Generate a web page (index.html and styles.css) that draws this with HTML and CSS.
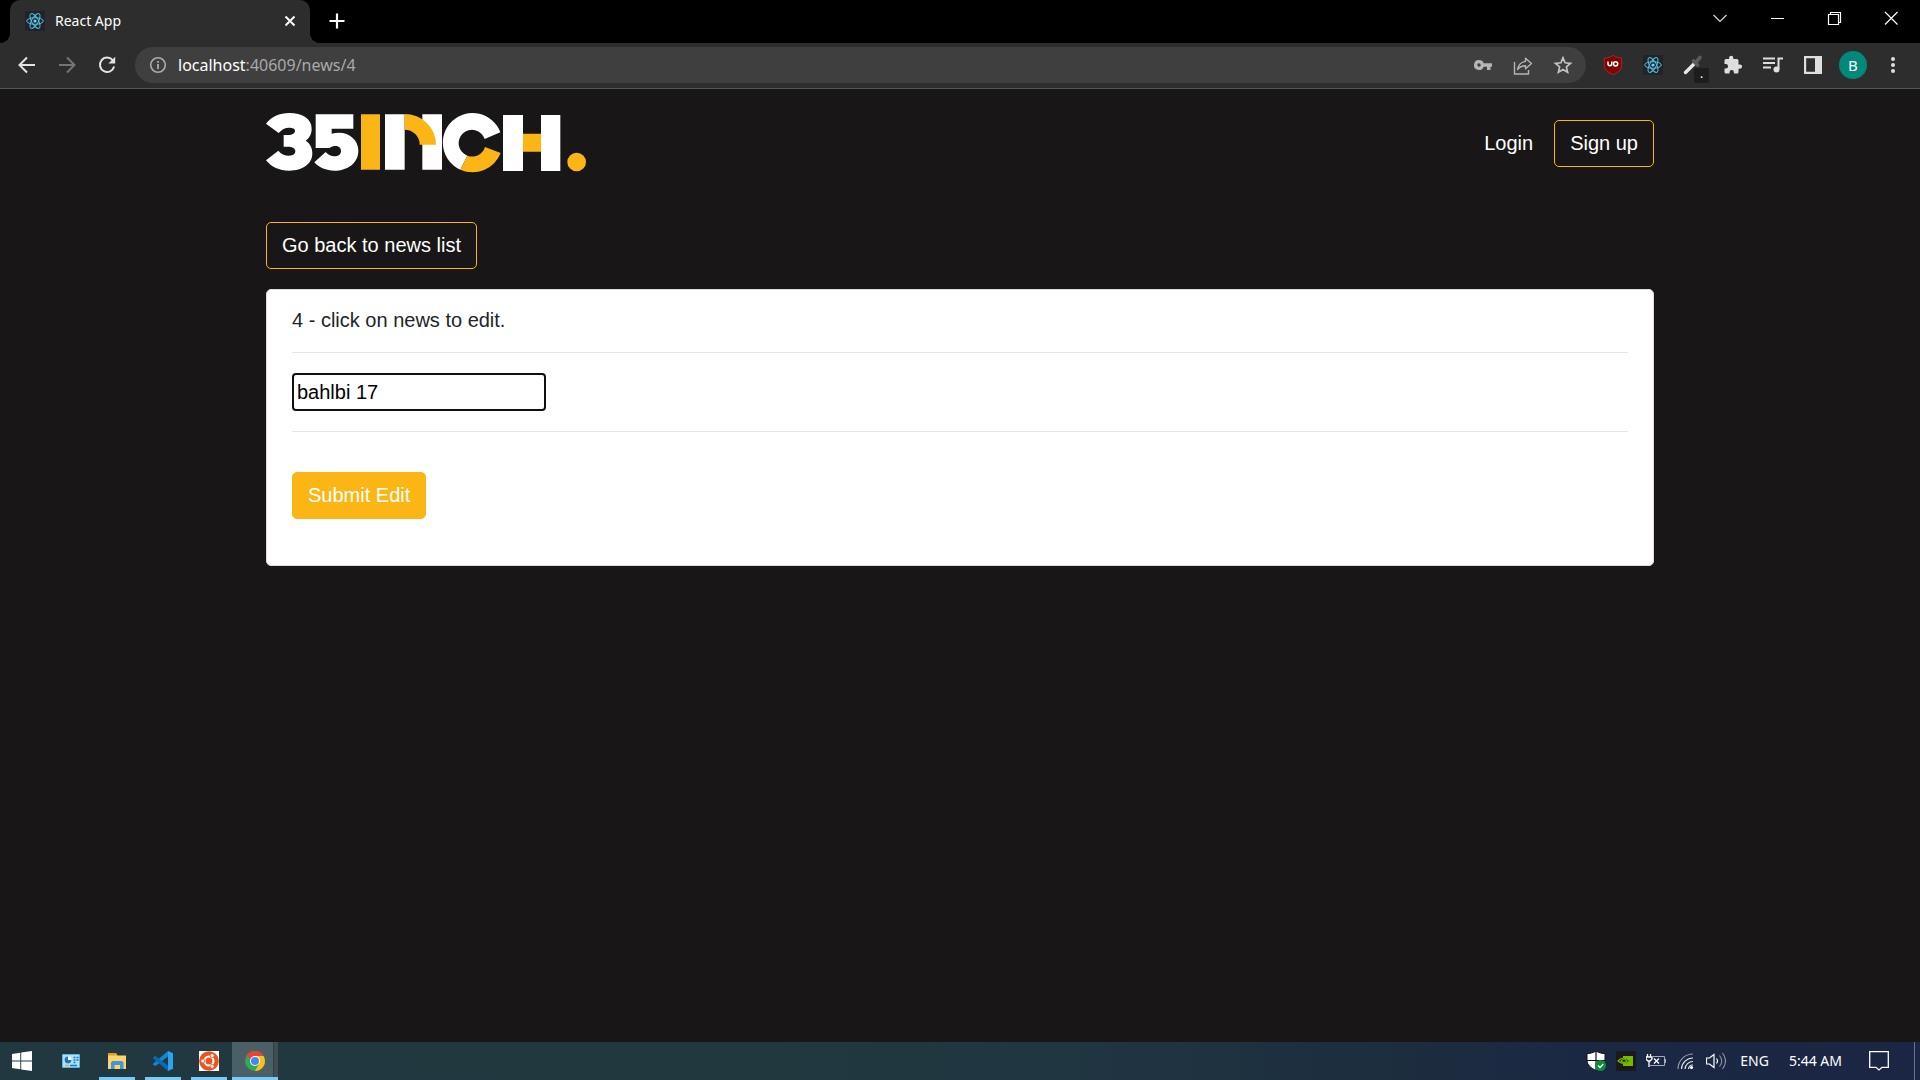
FILE: index.html
```html
<!DOCTYPE html>
<html lang="en">
<head>
<meta charset="utf-8">
<title>React App</title>
<link rel="stylesheet" href="styles.css">
</head>
<body>
<svg class="defs" aria-hidden="true">
  <symbol id="react" viewBox="0 0 20 20">
    <rect width="20" height="20" rx="1" fill="#20232a"/>
    <g fill="none" stroke="#61dafb" stroke-width="1" opacity=".85">
      <ellipse cx="10" cy="10" rx="8.3" ry="3.3"/>
      <ellipse cx="10" cy="10" rx="8.3" ry="3.3" transform="rotate(60 10 10)"/>
      <ellipse cx="10" cy="10" rx="8.3" ry="3.3" transform="rotate(120 10 10)"/>
    </g>
    <circle cx="10" cy="10" r="1.6" fill="#61dafb"/>
  </symbol>
</svg>

<header class="browser">
  <div class="tabstrip">
    <div class="tab">
      <svg class="i20"><use href="#react"/></svg>
      <span class="tab-title">React App</span>
      <button class="icon-btn" aria-label="Close tab"><svg class="i20" viewBox="0 0 20 20"><path d="M5.5 5.5l9 9M14.500 5.500l-9 9" stroke="#fff" stroke-width="2"/></svg></button>
    </div>
    <button class="icon-btn new-tab" aria-label="New tab"><svg class="i20" viewBox="0 0 20 20"><path d="M10 2.500v15M2.500 10h15" stroke="#fff" stroke-width="2.200"/></svg></button>
    <div class="window-controls">
      <button class="icon-btn" aria-label="Search tabs"><svg class="i20" viewBox="0 0 20 20"><path d="M3.500 7l6.500 6.500 6.500-6.500" fill="none" stroke="#ddd" stroke-width="1.200"/></svg></button>
      <button class="icon-btn" aria-label="Minimize"><svg class="i20" viewBox="0 0 20 20"><path d="M4 10.500h13" stroke="#fff"/></svg></button>
      <button class="icon-btn" aria-label="Restore"><svg class="i20" viewBox="0 0 20 20"><path d="M4.500 6.500h10v10h-10zM6.500 6.500v-2h10v10h-2" fill="none" stroke="#fff" stroke-width="1.200"/></svg></button>
      <button class="icon-btn" aria-label="Close"><svg class="i20" viewBox="0 0 20 20"><path d="M4 4l12.500 12.500M16.500 4L4 16.500" stroke="#fff" stroke-width="1.200"/></svg></button>
    </div>
  </div>
  <div class="toolbar">
    <button class="icon-btn" aria-label="Back"><svg class="i20" viewBox="0 0 20 20"><path d="M18 10H3M10 2.500L2.500 10l7.500 7.500" fill="none" stroke="#e3e3e3" stroke-width="2"/></svg></button>
    <button class="icon-btn" aria-label="Forward"><svg class="i20" viewBox="0 0 20 20"><path d="M2 10h15M10 2.500l7.500 7.500-7.500 7.500" fill="none" stroke="#757575" stroke-width="2"/></svg></button>
    <button class="icon-btn" aria-label="Reload"><svg class="i20" viewBox="0 0 20 20"><path d="M15.700 5.200A7.200 7.200 0 1 0 17.100 11.500" fill="none" stroke="#e3e3e3" stroke-width="2"/><path d="M18.200 1.800V8.600H11.400z" fill="#e3e3e3"/></svg></button>
    <div class="omnibox">
      <svg class="i18" viewBox="0 0 18 18"><circle cx="9" cy="9" r="7.300" fill="none" stroke="#a9abae" stroke-width="1.600"/><path d="M9 8v5M9 5v1.800" stroke="#a9abae" stroke-width="1.800"/></svg>
      <span class="url"><b>localhost</b>:40609/news/4</span>
      <button class="icon-btn" aria-label="Passwords"><svg class="i20" viewBox="0 0 20 20"><path fill-rule="evenodd" fill="#b5b5b5" d="M6 5a5 5 0 1 0 4.700 6.700H14V15h3.500v-3.300H19V8.300h-8.300A5 5 0 0 0 6 5zm0 3.300a1.700 1.700 0 1 1 0 3.400 1.700 1.700 0 0 1 0-3.400z"/></svg></button>
      <button class="icon-btn" aria-label="Share"><svg class="i20" viewBox="0 0 20 20"><path d="M1.500 7v12h14v-4" fill="none" stroke="#b5b5b5" stroke-width="1.400"/><path d="M12.500 3.300L18.500 8.500l-6 5.200v-3c-3.500 0-6 1-8 3.800.8-4.500 3.500-7.500 8-8.100z" fill="none" stroke="#b5b5b5" stroke-width="1.400" stroke-linejoin="round"/></svg></button>
      <button class="icon-btn" aria-label="Bookmark"><svg class="i20" viewBox="0 0 20 20"><path d="M10 2.800l2.100 5 5.400.5-4.100 3.600 1.200 5.300L10 14.400l-4.600 2.800 1.200-5.300-4.100-3.600 5.400-.5z" fill="none" stroke="#c2c2c2" stroke-width="1.700"/></svg></button>
    </div>
    <div class="extensions">
      <button class="icon-btn" aria-label="uBlock Origin"><svg class="i20" viewBox="0 0 20 20"><path d="M10 .5c3 1.800 5.500 2.400 8.700 2.500V10c0 5-4 7.500-8.700 9.500C5.300 17.500 1.300 15 1.300 10V3C4.500 2.900 7 2.300 10 .5z" fill="#800000" stroke="#a33" stroke-width=".8"/><path d="M5 6.500v2.300a1.900 1.900 0 0 0 3.800 0V6.500" fill="none" stroke="#fff" stroke-width="1.500"/><circle cx="12.600" cy="8.800" r="2.100" fill="none" stroke="#fff" stroke-width="1.500"/></svg></button>
      <button class="icon-btn" aria-label="React Developer Tools"><svg class="i20"><use href="#react"/></svg></button>
      <button class="icon-btn picker" aria-label="Color picker"><svg class="i20" viewBox="0 0 20 20"><path d="M2.500 17.500L13 7" stroke="#e8e8e8" stroke-width="3.400" stroke-linecap="round"/><path d="M10.500 6l4 4M13 7l4-4.500" stroke="#5b5b5b" stroke-width="3.600" stroke-linecap="round"/></svg><span class="badge">.</span></button>
      <button class="icon-btn" aria-label="Extensions"><svg class="i20" viewBox="0 0 20 20"><path fill="#dedede" d="M17 9.500H15.500V5.500A1.600 1.600 0 0 0 13.900 4H10.300V2.800a2.100 2.100 0 0 0-4.200 0V4H3A1.500 1.500 0 0 0 1.500 5.500v3.400h1.300a2.200 2.200 0 0 1 0 4.500H1.500V17A1.500 1.500 0 0 0 3 18.500h3.500v-1.200a2.200 2.200 0 0 1 4.400 0v1.200h3.100a1.500 1.500 0 0 0 1.500-1.500v-3.300H17a2.100 2.100 0 0 0 0-4.200z"/></svg></button>
      <button class="icon-btn" aria-label="Media"><svg class="i20" viewBox="0 0 20 20"><path d="M0 3.500h12M0 8h12M0 12.500h8M15.500 14V3.500H20" fill="none" stroke="#dedede" stroke-width="2"/><circle cx="13.500" cy="14.500" r="3" fill="#dedede"/></svg></button>
      <button class="icon-btn" aria-label="Side panel"><svg class="i20" viewBox="0 0 20 20"><path fill-rule="evenodd" fill="#dedede" d="M1 1h18v18H1zM3.200 3.200v13.600H12V3.200z"/></svg></button>
      <button class="icon-btn avatar" aria-label="Profile">B</button>
      <button class="icon-btn" aria-label="Menu"><svg class="i20" viewBox="0 0 20 20"><g fill="#dedede"><circle cx="10" cy="4" r="2"/><circle cx="10" cy="10" r="2"/><circle cx="10" cy="16" r="2"/></g></svg></button>
    </div>
  </div>
</header>

<main class="page">
  <div class="container">
    <nav class="navbar">
      <a href="#" class="brand" aria-label="35inch">
        <svg viewBox="0 0 960 182" class="logo">
          <g fill="#fff">
            <path d="M0 33C16 12 40 1 70 1c38 0 67 17 67 47 0 16-7 28-18 36 13 8 20 22 20 38 0 33-30 52-69 52-31 0-54-11-70-31l37-29c8 10 19 15 32 15 12 0 19-5 19-13 0-9-8-14-22-14H53V67h14c12 0 20-5 20-12 0-7-7-10-18-10-12 0-21 5-31 16z"/>
            <path d="M149 5h113v43h-65v15c44-12 80 14 80 51 0 37-32 60-72 60-24 0-46-9-60-25l34-31c8 9 17 13 26 13 12 0 20-6 20-16 0-14-18-20-34-9h-42z"/>
            <path d="M357 5h59v166h-59zM469 5h59v166h-59z"/>
            <path d="M703 59A89 89 0 1 0 583 171L604 129A40 40 0 1 1 656 79z"/>
            <path d="M711 7h60v168h-60zM825 7h58v168h-58z"/>
          </g>
          <g fill="#fbb615">
            <path d="M285 5h57v166h-57zM771 63h54v54h-54z"/>
            <path d="M416 4a94 92 0 0 1 94 92h-49a45 45 0 0 0-45-45z"/>
            <path d="M583 171L604 129A40 40 0 0 0 657 103L704 121A90 90 0 0 1 583 171z"/>
            <circle cx="932" cy="148" r="28"/>
          </g>
        </svg>
      </a>
      <div class="nav-links">
        <a href="#" class="login">Login</a>
        <a href="#" class="btn btn-outline">Sign up</a>
      </div>
    </nav>
    <button class="btn btn-outline">Go back to news list</button>
    <form class="card">
      <label for="news">4 - click on news to edit.</label>
      <hr>
      <input id="news" type="text" value="bahlbi 17">
      <hr>
      <button class="btn btn-primary" type="button">Submit Edit</button>
    </form>
  </div>
</main>

<footer class="taskbar">
  <div class="apps">
    <button class="app start" aria-label="Start"><svg class="i20" viewBox="0 0 20 20"><path fill="#fff" d="M0 2.900l8.300-1.200v7.800H0zM9.200 1.500L20 0v9.500H9.200zM0 10.400h8.300v7.900L0 17.100zM9.200 10.400H20V20L9.200 18.400z"/></svg></button>
    <button class="app" aria-label="Control Panel"><svg class="i18" viewBox="0 0 18 18"><rect y="2" width="18" height="14" rx="1" fill="#5bb7e8"/><rect x="1" y="3" width="16" height="12" fill="#aee0fa"/><circle cx="6" cy="8" r="3.400" fill="#fff"/><path d="M6 8V4.600A3.400 3.400 0 1 0 9.400 8z" fill="#1479c9"/><path d="M11.500 5.500h2M14.500 5.500h2M11.500 8h2M14.500 8h2M11.500 10.500h2" stroke="#1479c9" stroke-width="1.400"/><path d="M3 13.500h4" stroke="#f5a623" stroke-width="1.500"/><path d="M8 13.500h7" stroke="#1479c9" stroke-width="1.500"/></svg></button>
    <button class="app open" aria-label="File Explorer"><svg class="i18" viewBox="0 0 18 18"><path d="M0 1h8l1.500 2.500H18V17H0z" fill="#fbd46d"/><path d="M0 1h8l1 2.500H0z" fill="#dda315"/><path d="M3 17v-6.500L4.500 9h9.500l1.500 1.500V17h-3.500v-4H6.500v4z" fill="#3f97e0"/></svg></button>
    <button class="app open" aria-label="Visual Studio Code"><svg class="i20" viewBox="0 0 20 20"><path d="M15 0l5 2.300v15.400L15 20z" fill="#2aa5f2"/><path d="M15 0v5.500L2.500 15 0 13.700v-1z" fill="#1684cf"/><path d="M15 20v-5.500L2.500 5 0 6.300v1z" fill="#0a6bb5"/></svg></button>
    <button class="app open" aria-label="Ubuntu"><svg class="i20" viewBox="0 0 20 20"><rect width="20" height="20" fill="#fff"/><circle cx="10" cy="10" r="9.800" fill="#e95420"/><circle cx="10" cy="10" r="4.500" fill="none" stroke="#fff" stroke-width="2"/><g fill="#fff" stroke="#e95420" stroke-width=".8"><circle cx="3.800" cy="10" r="2"/><circle cx="13.200" cy="4.600" r="2"/><circle cx="13.200" cy="15.400" r="2"/></g></svg></button>
    <button class="app open active" aria-label="Google Chrome"><svg class="i20" viewBox="0 0 20 20"><circle cx="10" cy="10" r="10" fill="#34a853"/><path d="M10 10L1.340 5A10 10 0 0 1 18.660 5z" fill="#ea4335"/><path d="M10 5h8.660A10 10 0 0 1 10 20l4.330-7.500z" fill="#fbc116"/><circle cx="10" cy="10" r="5" fill="#fff"/><circle cx="10" cy="10" r="4" fill="#4285f4"/></svg></button>
  </div>
  <div class="tray">
    <svg class="i20" viewBox="0 0 20 20"><path d="M10 0c3 1.900 6 2.500 9 2.500V9c0 5-4 8-9 10.500C5 17 1 14 1 9V2.500C4 2.500 7 1.900 10 0z" fill="#fff" stroke="#111"/><path d="M10 0v19M1 9.500h18" stroke="#111" stroke-width="1.200"/><circle cx="14.500" cy="14.500" r="5.500" fill="#10893e"/><path d="M12 14.500l2 2 3.300-3.500" fill="none" stroke="#fff" stroke-width="1.300"/></svg>
    <svg class="i20" viewBox="0 0 20 20"><rect width="20" height="20" fill="#1a1a1a"/><path d="M7 5h10v10H7z" fill="#76b900"/><path d="M2 10q5-6 12 0-6 5-12 0z" fill="#1a1a1a" stroke="#76b900" stroke-width="1.200"/><path d="M5 10q3-3.500 6 0-3 3-6 0z" fill="none" stroke="#76b900" stroke-width="1.200"/></svg>
    <svg class="i20" viewBox="0 0 20 20"><path d="M7 5.500h11.500v9H4M19.500 8v4" fill="none" stroke="#a5acb8"/><path d="M1.500 3v3M4.500 3v3M0 6h6v2L4 10H2L0 8zM3 10v6M8 7.500l5 5M13 7.500l-5 5" fill="none" stroke="#fff" stroke-width="1.300"/></svg>
    <svg class="i20" viewBox="0 0 20 20"><g fill="none" stroke="#e0e3e8" stroke-width="1.200"><path d="M2 18A15 15 0 0 1 17 3" opacity=".6"/><path d="M5.500 18A11.500 11.500 0 0 1 17 7M9 18a8 8 0 0 1 8-7.500M12.500 18a4.500 4.500 0 0 1 4.500-4"/></g><circle cx="15.500" cy="16.500" r="1.600" fill="#fff"/></svg>
    <svg class="i20" viewBox="0 0 20 20"><path d="M.5 7h3L8 3.500v13L3.500 13h-3zM10.500 7.500q2 2.500 0 5" fill="none" stroke="#fff" stroke-width="1.200"/><path d="M13.500 4.500q4.500 5.500 0 11M16.500 2q6 8 0 16" fill="none" stroke="#8c95a5" stroke-width="1.100"/></svg>
    <span class="lang">ENG</span>
    <time class="clock">5:44 AM</time>
    <svg class="i20" viewBox="0 0 20 20"><path d="M.7.7h18.600v15.600H13L10 19l-3-2.700H.7z" fill="none" stroke="#fff" stroke-width="1.300"/></svg>
  </div>
</footer>
</body>
</html>
```
FILE: styles.css
```css
* { box-sizing: border-box; }

body {
  margin: 0;
  min-height: 100vh;
  display: flex;
  flex-direction: column;
  background: #181617;
  color: #fff;
  font: 20px/30px "Liberation Sans", Arial, sans-serif;
}

button { font: inherit; color: inherit; cursor: pointer; }
a { color: inherit; text-decoration: none; }
svg { display: block; flex: none; }
.defs { position: absolute; width: 0; height: 0; }
.i18 { width: 18px; height: 18px; }
.i20 { width: 20px; height: 20px; }

.icon-btn {
  display: flex;
  align-items: center;
  justify-content: center;
  flex: none;
  padding: 0;
  border: 0;
  background: none;
}

/* Browser chrome */
.browser { font-family: "Noto Sans", "Open Sans", sans-serif; }

.tabstrip {
  display: flex;
  height: 43px;
  padding-left: 10px;
  background: #000;
}

.tab {
  position: relative;
  display: flex;
  align-items: center;
  width: 300px;
  padding: 0 10px 1px 15px;
  border-radius: 10px 10px 0 0;
  background: #2d2d2d;
  font-size: 14px;
}
.tab::before,
.tab::after {
  content: "";
  position: absolute;
  bottom: 0;
  width: 10px;
  height: 10px;
}
.tab::before { left: -10px; background: radial-gradient(circle at 0 0, #000 10px, #2d2d2d 10px); }
.tab::after { right: -10px; background: radial-gradient(circle at 100% 0, #000 10px, #2d2d2d 10px); }
.tab-title { flex: 1; margin-left: 10px; }
.new-tab { margin-left: 17px; padding-bottom: 1px; }

.window-controls { display: flex; margin: 0 1px 0 auto; height: 36px; }
.window-controls .icon-btn { width: 57px; }

.toolbar {
  display: flex;
  align-items: center;
  gap: 20px;
  height: 46px;
  padding: 0 17px 1px;
  border-bottom: 1px solid #555;
  background: #2d2d2d;
}

.omnibox {
  display: flex;
  flex: 1;
  align-items: center;
  gap: 20px;
  height: 36px;
  margin-left: -2px;
  padding: 0 13px 0 14px;
  border-radius: 18px;
  background: #3f3f3f;
}
.url { flex: 1; margin-left: -9px; font-size: 16px; color: #a9a9a9; }
.url b { font-weight: 400; color: #fff; }

.extensions { display: flex; align-items: center; gap: 20px; margin-left: -3px; }
.picker { position: relative; }
.badge {
  position: absolute;
  right: -6px;
  bottom: -8px;
  width: 15px;
  height: 15px;
  border-radius: 2px;
  background: #1d1d1d;
  color: #fff;
  font-size: 12px;
  line-height: 12px;
}
.avatar {
  width: 28px;
  height: 28px;
  margin: 0 -4px;
  border-radius: 50%;
  background: #00897b;
  font-size: 15px;
}

/* Page */
.page { flex: 1; }
.container { max-width: 1388px; margin: 0 auto; }

.navbar {
  display: flex;
  align-items: center;
  justify-content: space-between;
  padding: 23px 0 48px;
}
.logo { width: 320px; height: 62px; }
.nav-links { display: flex; align-items: center; gap: 21px; }

.btn {
  display: inline-block;
  padding: 8px 15px;
  border: 1px solid #fbb615;
  border-radius: 5px;
  line-height: 29px;
  background: transparent;
}
.btn-primary { background: #fbb615; }

.card {
  margin-top: 20px;
  padding: 18px 25px 46px;
  border: 1px solid #dfdfdf;
  border-radius: 5px;
  background: #fff;
  color: #212529;
}
.card label { display: block; line-height: 24px; }
.card hr { margin: 20px 0; border: 0; border-top: 1px solid #e5e5e5; }
.card input {
  display: block;
  width: 254px;
  height: 38px;
  padding: 2px 3px;
  border: 2px solid #101010;
  border-radius: 4px;
  background: #fff;
  color: #000;
  font: inherit;
  outline: 0;
}
.card .btn { margin-top: 20px; color: #fff; }

/* Taskbar */
.taskbar {
  display: flex;
  justify-content: space-between;
  height: 38px;
  background: linear-gradient(90deg, #213840, #21383f 40%, #203641 55%, #1c2c3e 75%, #1b2843 82%, #1a2643);
  font: 14px/20px "Noto Sans", "Open Sans", sans-serif;
}
.apps { display: flex; }
.app {
  display: flex;
  align-items: center;
  justify-content: center;
  width: 46px;
  padding: 0;
  border: 0;
  background: none;
}
.start { width: 44px; margin-right: 4px; }
.open {
  border: solid transparent;
  border-width: 0 5px;
  background: linear-gradient(#76cdfa, #76cdfa) bottom / 100% 3px no-repeat content-box;
}
.active {
  border-width: 0;
  background:
    linear-gradient(#76cdfa, #76cdfa) bottom / 100% 3px no-repeat,
    linear-gradient(90deg, #4b5f67 41px, #2f3f44 41px, #2f3f44 42px, #414d51 42px);
}

.tray {
  display: flex;
  align-items: center;
  gap: 10px;
  padding-right: 25px;
  margin-right: 5px;
  border-right: 1px solid #6b7488;
}
.lang { margin-left: 4px; }
.clock { margin: 0 17px 0 10px; }
```
